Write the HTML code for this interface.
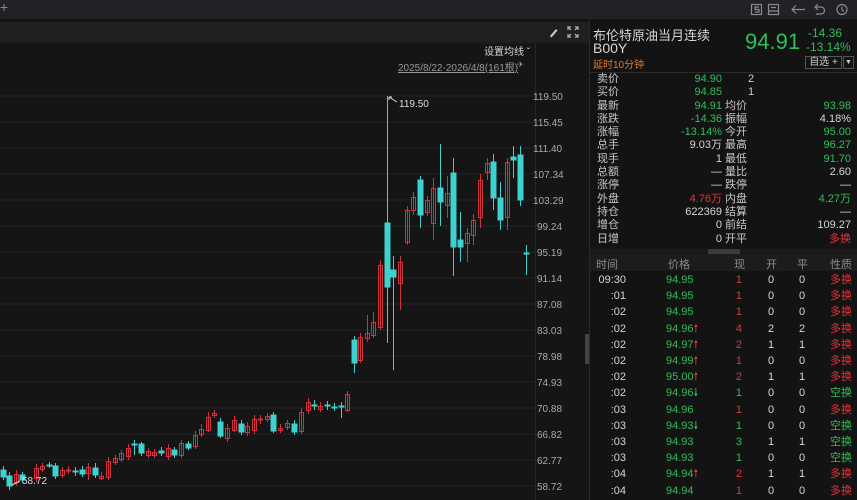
<!DOCTYPE html>
<html><head><meta charset="utf-8">
<style>
*{margin:0;padding:0;box-sizing:border-box}
body{width:857px;height:500px;background:#151515;overflow:hidden;position:relative;font-family:"Liberation Sans","Noto Sans CJK SC",sans-serif;color:#c8c8c8}
.a{position:absolute;white-space:nowrap}
.g{color:#2fbf5a}.r{color:#e8323c}.w{color:#d6d6d6}.gr{color:#8c8c8c}
.q{font-size:11px;line-height:13.3px}
</style></head><body>
<div class="a" style="left:0;top:0;width:857px;height:19px;background:#212226"></div>
<div class="a" style="left:0;top:19px;width:857px;height:3px;background:#131313"></div>
<div class="a" style="left:0;top:22px;width:589px;height:20px;background:#202020"></div>
<div class="a" style="left:0;top:42px;width:589px;height:2px;background:#1a1a1a"></div>
<div class="a" style="left:0;top:-1px;font-size:14px;color:#888">+</div>
<svg class="a" style="left:740px;top:0" width="117" height="19" viewBox="0 0 117 19">
<g fill="none" stroke="#8a8a8a" stroke-width="1.2">
<rect x="11.5" y="4.5" width="10" height="10"/>
<path d="M19 7h-4v2.5h4v2.5h-4"/>
<rect x="28.5" y="4.5" width="10" height="10"/><path d="M28.5 11h10M31 7.5h5"/>
<path d="M52 9.5h13M56 5.5l-4 4 4 4"/>
<path d="M75 7h6a3.5 3.5 0 0 1 0 7h-5M78 4l-3 3 3 3"/>
<circle cx="102" cy="9.5" r="5"/><path d="M102 6.5v3.5l2 1.5"/>
</g></svg>
<svg class="a" style="left:548px;top:24px" width="32" height="16">
<path d="M2 12l6-7 1.5 1.5-6 7z" fill="#ccc"/>
<g stroke="#bbb" stroke-width="1.2" fill="none"><path d="M20 6V3h3M27 3h3v3M20 10v3h3M30 10v3h-3M21 4l2 2M29 4l-2 2M21 12l2-2M29 12l-2-2"/></g>
</svg>
<div class="a w" style="left:484px;top:43px;font-size:10px">设置均线 ˇ</div>
<div class="a gr" style="left:398px;top:59px;font-size:10px;text-decoration:underline;color:#999">2025/8/22-2026/4/8(161根)</div>
<div class="a" style="left:517px;top:60px;font-size:8px;color:#999">✈</div>
<svg class="a" style="left:0;top:44px" width="589" height="456" viewBox="0 44 589 456">
<g stroke="#222" stroke-width="1">
<path d="M0 96H535M0 122H535M0 148H535M0 174H535M0 200H535M0 226H535M0 252H535M0 278H535M0 304H535M0 330H535M0 356H535M0 382H535M0 408H535M0 434H535M0 460H535M0 486H535"/>
</g>
<path d="M535.5 44V500" stroke="#262626"/>
<g font-size="10" fill="#aaa" font-family="Liberation Sans,sans-serif">
<text x="533" y="100">119.50</text><text x="533" y="126">115.45</text><text x="533" y="152">111.40</text><text x="533" y="178">107.34</text><text x="533" y="204">103.29</text><text x="537" y="230">99.24</text><text x="537" y="256">95.19</text><text x="537" y="282">91.14</text><text x="537" y="308">87.08</text><text x="537" y="334">83.03</text><text x="537" y="360">78.98</text><text x="537" y="386">74.93</text><text x="537" y="412">70.88</text><text x="537" y="438">66.82</text><text x="537" y="464">62.77</text><text x="537" y="490">58.72</text>
</g>
<rect x="585" y="334" width="4" height="30" fill="#444"/>
<g fill="#3fd0d0" stroke="#3fd0d0">
<path d="M3.5 466V480M9.5 472V490M22.5 472V483M49.5 462V468M55.5 463V479M75.5 467V476M82.5 466V477M95.5 463V478M134.5 440V455M141.5 442V456M161.5 447V456M174.5 447V458M188.5 441V450M220.5 418V438M241.5 420V435M273.5 412V433M294.5 420V435M314.5 400V410M327.5 401V410M334.5 403V411M341.5 402V418M354.5 336V373M387.5 96V343M393.5 256V370M420.5 176V228M440.5 144V226M453.5 158V276M460.5 212V262M493.5 154V210M500.5 182V230M513.5 146V178M520.5 146V206M526.5 245V275" fill="none" stroke-width="1"/>
<rect x="1" y="470" width="5" height="7"/><rect x="7" y="476" width="5" height="10"/><rect x="20" y="475" width="5" height="5"/><rect x="47" y="465" width="5" height="1"/><rect x="53" y="466" width="5" height="10"/><rect x="73" y="471" width="5" height="1"/><rect x="80" y="470" width="5" height="4"/><rect x="93" y="468" width="5" height="7"/><rect x="132" y="444" width="5" height="1"/><rect x="139" y="444" width="5" height="9"/><rect x="159" y="451" width="5" height="2"/><rect x="172" y="450" width="5" height="5"/><rect x="186" y="444" width="5" height="4"/><rect x="218" y="422" width="5" height="14"/><rect x="239" y="424" width="5" height="8"/><rect x="271" y="415" width="5" height="16"/><rect x="292" y="424" width="5" height="8"/><rect x="312" y="405" width="5" height="1"/><rect x="325" y="405" width="5" height="1"/><rect x="332" y="407" width="5" height="1"/><rect x="339" y="406" width="5" height="1"/><rect x="352" y="340" width="5" height="23"/><rect x="385" y="223" width="5" height="64"/><rect x="391" y="270" width="5" height="7"/><rect x="418" y="180" width="5" height="35"/><rect x="438" y="188" width="5" height="14"/><rect x="451" y="173" width="5" height="74"/><rect x="458" y="240" width="5" height="7"/><rect x="491" y="162" width="5" height="36"/><rect x="498" y="198" width="5" height="22"/><rect x="511" y="157" width="5" height="3"/><rect x="518" y="155" width="5" height="45"/><rect x="524" y="253" width="5" height="1"/>
</g>
<g stroke="#d0333d" fill="none" stroke-width="1">
<path d="M16.5 470V486M36.5 464V482M42.5 463V472M62.5 467V478M68.5 466V474M88.5 463V480M101.5 472V480M108.5 457V480M115.5 455V465M121.5 450V462M128.5 444V460M148.5 448V458M154.5 449V458M168.5 444V460M181.5 440V458M195.5 431V449M201.5 424V437M208.5 412V432M214.5 410V418M227.5 424V442M234.5 416V432M247.5 422V436M254.5 415V434M260.5 415V424M267.5 413V422M280.5 424V433M287.5 420V430M301.5 408V434M308.5 398V414M320.5 402V412M347.5 391V412M360.5 333V363M367.5 315V342M373.5 312V338M380.5 260V330M400.5 256V310M407.5 206V245M413.5 192V215M427.5 196V216M433.5 178V240M447.5 176V218M467.5 228V262M473.5 214V245M480.5 174V228M487.5 158V180M507.5 158V230"/>
<rect x="14.5" y="474.5" width="4" height="8"/><rect x="34.5" y="468.5" width="4" height="10"/><rect x="40.5" y="466.5" width="4" height="3"/><rect x="60.5" y="470.5" width="4" height="5"/><rect x="66.5" y="470" width="4" height="1"/><rect x="86.5" y="467.5" width="4" height="6"/><rect x="99.5" y="476.5" width="4" height="2"/><rect x="106.5" y="461.5" width="4" height="16"/><rect x="113.5" y="458.5" width="4" height="4"/><rect x="119.5" y="453.5" width="4" height="6"/><rect x="126.5" y="448.5" width="4" height="8"/><rect x="146.5" y="451.5" width="4" height="4"/><rect x="152.5" y="452.5" width="4" height="3"/><rect x="166.5" y="448.5" width="4" height="8"/><rect x="179.5" y="443.5" width="4" height="12"/><rect x="193.5" y="435.5" width="4" height="11"/><rect x="199.5" y="429.5" width="4" height="5"/><rect x="206.5" y="417.5" width="4" height="13"/><rect x="212.5" y="413.5" width="4" height="2"/><rect x="225.5" y="428.5" width="4" height="10"/><rect x="232.5" y="420.5" width="4" height="10"/><rect x="245.5" y="426.5" width="4" height="6"/><rect x="252.5" y="419.5" width="4" height="11"/><rect x="258.5" y="419" width="4" height="1"/><rect x="265.5" y="416.5" width="4" height="3"/><rect x="278.5" y="428.5" width="4" height="2"/><rect x="285.5" y="423.5" width="4" height="4"/><rect x="299.5" y="412.5" width="4" height="19"/><rect x="306.5" y="402.5" width="4" height="8"/><rect x="318.5" y="406.5" width="4" height="3"/><rect x="345.5" y="394.5" width="4" height="16"/><rect x="358.5" y="337.5" width="4" height="23"/><rect x="365.5" y="333.5" width="4" height="5"/><rect x="371.5" y="322.5" width="4" height="13"/><rect x="378.5" y="265.5" width="4" height="62"/><rect x="398.5" y="262.5" width="4" height="21"/><rect x="405.5" y="210.5" width="4" height="32"/><rect x="411.5" y="197.5" width="4" height="13"/><rect x="425.5" y="200.5" width="4" height="12"/><rect x="431.5" y="188.5" width="4" height="35"/><rect x="445.5" y="193.5" width="4" height="12"/><rect x="465.5" y="233.5" width="4" height="10"/><rect x="471.5" y="220.5" width="4" height="15"/><rect x="478.5" y="180.5" width="4" height="37"/><rect x="485.5" y="163.5" width="4" height="9"/><rect x="505.5" y="162.5" width="4" height="55"/>
</g>
<path d="M389 97l8 5M389 97h3M389 97v3" stroke="#ddd" fill="none"/>
<text x="399" y="107" font-size="10" fill="#ddd" font-family="Liberation Sans,sans-serif">119.50</text>
<path d="M12 485l8-4" stroke="#ddd"/>
<text x="22" y="484" font-size="10" fill="#ddd" font-family="Liberation Sans,sans-serif">58.72</text>
</svg>
<div class="a" style="left:589px;top:19px;width:1px;height:481px;background:#2a2a2a"></div>
<div class="a" style="left:590px;top:22px;width:267px;height:478px;background:#131313"></div>
<div class="a w" style="left:593px;top:25px;font-size:13px">布伦特原油当月连续</div>
<div class="a w" style="left:593px;top:40px;font-size:14px">B00Y</div>
<div class="a" style="left:593px;top:56px;font-size:10px;color:#e07a2a">延时10分钟</div>
<div class="a g" style="left:745px;top:29px;font-size:22px">94.91</div>
<div class="a g" style="left:808px;top:26px;font-size:12px">-14.36</div>
<div class="a g" style="left:806px;top:40px;font-size:12px">-13.14%</div>
<div class="a" style="left:805px;top:56px;width:37px;height:13px;border:1px solid #555;font-size:10px;line-height:11px;text-align:center;color:#ccc">自选 +</div>
<div class="a" style="left:843px;top:56px;width:11px;height:13px;border:1px solid #555;font-size:7px;line-height:11px;text-align:center;color:#ccc">▼</div>
<div class="a" style="left:590px;top:72px;width:267px;height:1px;background:#2a2a2a"></div>
<div class="a q" style="left:597px;top:73px;color:#c8c8c8">卖价<br>买价<br>最新<br>涨跌<br>涨幅<br>总手<br>现手<br>总额<br>涨停<br>外盘<br>持仓<br>增仓<br>日增</div>
<div class="a q" style="left:640px;top:73px;width:82px;text-align:right"><span class="g">94.90</span><br><span class="g">94.85</span><br><span class="g">94.91</span><br><span class="g">-14.36</span><br><span class="g">-13.14%</span><br><span class="w">9.03万</span><br><span class="w">1</span><br><span class="w">—</span><br><span class="w">—</span><br><span class="r">4.76万</span><br><span class="w">622369</span><br><span class="w">0</span><br><span class="w">0</span></div>
<div class="a q" style="left:748px;top:73px;color:#ccc">2<br>1</div>
<div class="a q" style="left:725px;top:99.6px;color:#c8c8c8">均价<br>振幅<br>今开<br>最高<br>最低<br>量比<br>跌停<br>内盘<br>结算<br>前结<br>开平</div>
<div class="a q" style="left:770px;top:99.6px;width:81px;text-align:right"><span class="g">93.98</span><br><span class="w">4.18%</span><br><span class="g">95.00</span><br><span class="g">96.27</span><br><span class="g">91.70</span><br><span class="w">2.60</span><br><span class="w">—</span><br><span class="g">4.27万</span><br><span class="w">—</span><br><span class="w">109.27</span><br><span class="r">多换</span></div>
<div class="a" style="left:590px;top:249px;width:267px;height:5px;background:#1a1a1a"></div>
<div class="a" style="left:708px;top:249px;width:32px;height:5px;background:#3a3a3a"></div>
<div class="a" style="left:590px;top:254px;width:267px;height:17px;background:#1c1c1c"></div>
<div class="a gr" style="left:596px;top:256px;font-size:11px;width:256px;height:13px">
<span class="a" style="left:0">时间</span><span class="a" style="left:72px">价格</span><span class="a" style="left:138px">现</span><span class="a" style="left:170px">开</span><span class="a" style="left:201px">平</span><span class="a" style="left:234px">性质</span></div>
<div class="a" style="left:596px;top:272px;font-size:11px;line-height:16.2px;width:256px">
<div class="a w" style="left:0;width:30px;text-align:right">09:30<br>:01<br>:02<br>:02<br>:02<br>:02<br>:02<br>:02<br>:03<br>:03<br>:03<br>:03<br>:04<br>:04</div>
<div class="a g" style="left:70px">94.95<br>94.95<br>94.95<br>94.96<span class="r">🠕</span><br>94.97<span class="r">🠕</span><br>94.99<span class="r">🠕</span><br>95.00<span class="r">🠕</span><br>94.96🠗<br>94.96<br>94.93🠗<br>94.93<br>94.93<br>94.94<span class="r">🠕</span><br>94.94</div>
<div class="a" style="left:136px;width:10px;text-align:right"><span class="r">1</span><br><span class="r">1</span><br><span class="r">1</span><br><span class="r">4</span><br><span class="r">2</span><br><span class="r">1</span><br><span class="r">2</span><br><span class="g">1</span><br><span class="r">1</span><br><span class="g">1</span><br><span class="g">3</span><br><span class="g">1</span><br><span class="r">2</span><br><span class="r">1</span></div>
<div class="a w" style="left:172px">0<br>0<br>0<br>2<br>1<br>0<br>1<br>0<br>0<br>0<br>1<br>0<br>1<br>0</div>
<div class="a w" style="left:203px">0<br>0<br>0<br>2<br>1<br>0<br>1<br>0<br>0<br>0<br>1<br>0<br>1<br>0</div>
<div class="a" style="left:234px"><span class="r">多换</span><br><span class="r">多换</span><br><span class="r">多换</span><br><span class="r">多换</span><br><span class="r">多换</span><br><span class="r">多换</span><br><span class="r">多换</span><br><span class="g">空换</span><br><span class="r">多换</span><br><span class="g">空换</span><br><span class="g">空换</span><br><span class="g">空换</span><br><span class="r">多换</span><br><span class="r">多换</span></div>
</div>
</body></html>
